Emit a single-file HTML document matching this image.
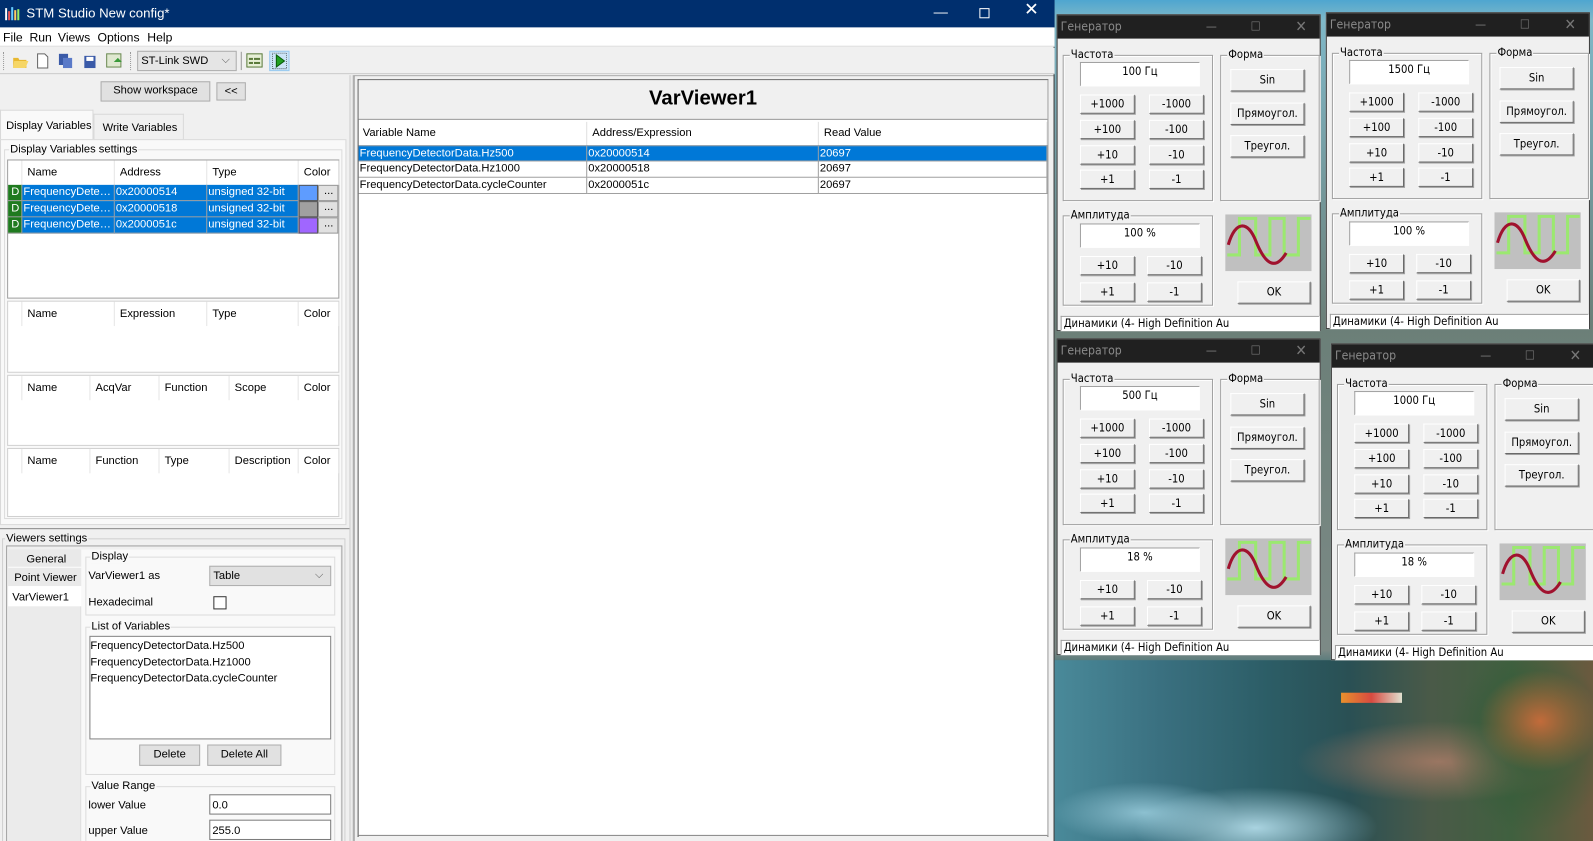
<!DOCTYPE html>
<html><head><meta charset="utf-8">
<style>
*{box-sizing:border-box;margin:0;padding:0}
html,body{width:1593px;height:841px;overflow:hidden;background:#f0f0f0}
body{font-family:"Liberation Sans","Noto Sans CJK SC",sans-serif;font-size:11px;color:#000}
#root{position:absolute;left:0;top:0;width:1568px;height:828px;transform:scale(1.01594,1.0157);transform-origin:0 0;overflow:hidden;background:#f0f0f0}
.a{position:absolute}
.t{position:absolute;white-space:nowrap;line-height:14px}
.btn{position:absolute;background:#e1e1e1;border:1px solid #adadad;text-align:center;line-height:17px;white-space:nowrap}
.grp{position:absolute;border:1px solid #d5d5d5}
.grp>span{position:absolute;top:-8px;left:4px;background:#f0f0f0;padding:0 1px;line-height:14px;white-space:nowrap}
.tbl{position:absolute;background:#fff;border:1px solid #a0a0a0}
.hd{position:absolute;top:0;height:24px;line-height:24px;padding-left:5px;border-right:1px solid #e5e5e5;white-space:nowrap}
.row{position:absolute;left:0;right:0;height:16px;line-height:15px;white-space:nowrap}
.cell{position:absolute;top:0;height:16px;padding-left:1px;border-right:1px solid #a0a0a0;border-bottom:1px solid #a0a0a0;overflow:hidden}
.gw{position:absolute;width:260px;height:312px;background:#f0f0f0;border:1px solid #3a3a3a;font-family:"DejaVu Sans Condensed","Liberation Sans Narrow","Liberation Sans",sans-serif;font-size:11px}
.gt{position:absolute;left:0;top:0;width:100%;height:23px;background:#202020;color:#8a8a8a;font-size:12px;line-height:23px;padding-left:3px}
.gt i{position:absolute;font-style:normal;color:#777;top:0}
.gg{position:absolute;border:1px solid #a0a0a0;box-shadow:1px 1px 0 #fff inset,1px 1px 0 #fff}
.gg>span{position:absolute;top:-8px;left:6px;background:#f0f0f0;padding:0 1px;line-height:14px;white-space:nowrap}
.gb{position:absolute;background:#f0f0f0;border:1px solid;border-color:#fff #696969 #696969 #fff;box-shadow:1px 1px 0 #a0a0a0;text-align:center;white-space:nowrap;line-height:17px}
.gi{position:absolute;background:#fff;border:1px solid;border-color:#a0a0a0 #fff #fff #a0a0a0;text-align:center;line-height:18px}
</style></head><body><div id="root">

<div class="a" style="left:1036px;top:0;width:532px;height:828px;background:linear-gradient(180deg,#4fa6d0 0px,#7fb8c8 20px,#6b7f78 320px,#7c8a86 640px,#3c6f73 660px,#2f5d63 740px,#6fa6b8 828px)"></div>
<div class="a" style="left:1036px;top:650px;width:532px;height:178px;background:
radial-gradient(ellipse 120px 40px at 200px 165px,#a9d3e0,transparent),
radial-gradient(ellipse 90px 30px at 90px 150px,#8cc0d0,transparent),
radial-gradient(ellipse 60px 50px at 480px 60px,#c26b3a,transparent),
radial-gradient(ellipse 80px 90px at 470px 80px,#2e5a36,transparent),
radial-gradient(ellipse 140px 40px at 380px 100px,#9a7662,transparent),
linear-gradient(90deg,#4a8a9a 0%,#3a7080 20%,#2c5d66 40%,#2a5054 55%,#4a5a48 70%,#40603f 85%,#6b5a3f 100%)"></div>
<div class="a" style="left:1320px;top:682px;width:60px;height:10px;background:linear-gradient(90deg,#e8902c,#d84a40,#e0e0d0)"></div>

<div class="a" style="left:0;top:0;width:1038px;height:828px;background:#f0f0f0;border-right:1px solid #333"></div>
<div class="a" style="left:0;top:0;width:1038px;height:27px;background:#002f6e;color:#fff">
 <svg class="a" style="left:5px;top:6px" width="16" height="14"><rect x="0" y="2" width="2" height="12" fill="#fff"/><rect x="3" y="5" width="2" height="9" fill="#e55"/><rect x="6" y="1" width="2" height="13" fill="#6cf"/><rect x="9" y="4" width="2" height="10" fill="#fc6"/><rect x="12" y="3" width="2" height="11" fill="#9e6"/></svg>
 <span class="t" style="left:26px;top:6px;font-size:13px">STM Studio New config*</span>
 <span class="t" style="left:919px;top:4px;font-size:14px">—</span>
 <div class="a" style="left:964px;top:8px;width:10px;height:10px;border:1px solid #fff"></div>
 <span class="t" style="left:1008px;top:3px;font-size:17px">✕</span>
</div>
<div class="a" style="left:0;top:27px;width:1038px;height:19px;background:#fff;border-bottom:1px solid #ddd;font-size:12px">
 <span class="t" style="left:3px;top:3px">File</span><span class="t" style="left:29px;top:3px">Run</span><span class="t" style="left:57px;top:3px">Views</span><span class="t" style="left:96px;top:3px">Options</span><span class="t" style="left:145px;top:3px">Help</span>
</div>
<div class="a" style="left:0;top:47px;width:1038px;height:26px;background:#f0f0f0;border-bottom:1px solid #ccc"></div>
<div class="a" style="left:3px;top:51px;width:2px;height:18px;border-left:1px dotted #999"></div>
<svg class="a" style="left:12px;top:52px" width="120" height="16">
 <path d="M1 5h5l1 2h7v8H1z" fill="#e8b830"/><path d="M2 8h14l-3 7H1z" fill="#f6d666"/>
 <path d="M25 1h7l3 3v11H25z" fill="#fff" stroke="#666"/>
 <rect x="46" y="1" width="9" height="11" fill="#3a5aa8"/><rect x="50" y="5" width="9" height="10" fill="#5a7ac8"/>
 <rect x="71" y="3" width="11" height="12" fill="#3a5aa8"/><rect x="73" y="4" width="7" height="4" fill="#fff"/>
 <rect x="93" y="1" width="14" height="13" fill="#dfe8d0" stroke="#6a8a50"/><path d="M100 9l4 -4 4 4z" fill="#3a9a3a"/>
</svg>
<div class="a" style="left:128px;top:51px;width:2px;height:18px;border-left:1px dotted #999"></div>
<div class="a" style="left:135px;top:50px;width:98px;height:20px;background:#e5e5e5;border:1px solid #adadad"><span class="t" style="left:3px;top:2px">ST-Link SWD</span><span class="t" style="left:82px;top:1px;color:#555">⌵</span></div>
<div class="a" style="left:237px;top:51px;width:1px;height:18px;background:#999"></div>
<svg class="a" style="left:242px;top:52px" width="18" height="16"><rect x="1" y="1" width="15" height="13" fill="#e6efd6" stroke="#5a7a3a"/><rect x="3" y="5" width="4" height="2" fill="#5a7a3a"/><rect x="8" y="5" width="6" height="2" fill="#5a7a3a"/><rect x="3" y="9" width="4" height="2" fill="#5a7a3a"/><rect x="8" y="9" width="6" height="2" fill="#5a7a3a"/></svg>
<div class="a" style="left:265px;top:50px;width:20px;height:20px;background:#cce4f7;border:1px solid #99c9ef"></div>
<svg class="a" style="left:268px;top:52px" width="14" height="16"><rect x="0" y="0" width="14" height="16" fill="none" stroke="#000" stroke-dasharray="1 1"/><path d="M4 2l8 6-8 6z" fill="#22a022" stroke="#0a5a0a"/></svg>

<div class="btn" style="left:99px;top:80px;width:108px;height:20px">Show workspace</div>
<div class="btn" style="left:213px;top:81px;width:29px;height:18px;line-height:16px">&lt;&lt;</div>
<div class="a" style="left:0;top:108px;width:92px;height:30px;background:#f9f9f9;border:1px solid #d9d9d9;border-bottom:none"><span class="t" style="left:5px;top:8px">Display Variables</span></div>
<div class="a" style="left:92px;top:112px;width:89px;height:25px;background:#f0f0f0;border:1px solid #d9d9d9;border-bottom:none"><span class="t" style="left:8px;top:6px">Write Variables</span></div>
<div class="a" style="left:0;top:137px;width:341px;height:380px;border:1px solid #d9d9d9;background:#f9f9f9"></div>
<div class="grp" style="left:4px;top:147px;width:333px;height:364px;border-color:#dcdcdc"><span style="background:#f9f9f9">Display Variables settings</span></div>

<div class="tbl" style="left:7px;top:157px;width:327px;height:137px">
 <div class="hd" style="left:0;width:14px"></div><div class="hd" style="left:14px;width:91px">Name</div><div class="hd" style="left:105px;width:91px">Address</div><div class="hd" style="left:196px;width:90px">Type</div><div class="hd" style="left:286px;width:40px">Color</div>
 <div class="row" style="top:24px"><div class="cell" style="left:0;width:14px;background:#1f7a1f;color:#fff;text-align:center">D</div><div class="cell" style="left:14px;width:91px;background:#0078d7;color:#fff">FrequencyDete…</div><div class="cell" style="left:105px;width:91px;background:#0078d7;color:#fff">0x20000514</div><div class="cell" style="left:196px;width:90px;background:#0078d7;color:#fff">unsigned 32-bit</div><div class="cell" style="left:286px;width:19px;background:#5e9cff;border:1px solid #555"></div><div class="cell" style="left:305px;width:20px;background:#e1e1e1;border:1px solid #999;text-align:center;line-height:11px">...</div></div>
 <div class="row" style="top:40px"><div class="cell" style="left:0;width:14px;background:#1f7a1f;color:#fff;text-align:center">D</div><div class="cell" style="left:14px;width:91px;background:#0078d7;color:#fff">FrequencyDete…</div><div class="cell" style="left:105px;width:91px;background:#0078d7;color:#fff">0x20000518</div><div class="cell" style="left:196px;width:90px;background:#0078d7;color:#fff">unsigned 32-bit</div><div class="cell" style="left:286px;width:19px;background:#a0a0a0;border:1px solid #555"></div><div class="cell" style="left:305px;width:20px;background:#e1e1e1;border:1px solid #999;text-align:center;line-height:11px">...</div></div>
 <div class="row" style="top:56px"><div class="cell" style="left:0;width:14px;background:#1f7a1f;color:#fff;text-align:center">D</div><div class="cell" style="left:14px;width:91px;background:#0078d7;color:#fff">FrequencyDete…</div><div class="cell" style="left:105px;width:91px;background:#0078d7;color:#fff">0x2000051c</div><div class="cell" style="left:196px;width:90px;background:#0078d7;color:#fff">unsigned 32-bit</div><div class="cell" style="left:286px;width:19px;background:#a066ff;border:1px solid #555"></div><div class="cell" style="left:305px;width:20px;background:#e1e1e1;border:1px solid #999;text-align:center;line-height:11px">...</div></div>
</div>
<div class="tbl" style="left:7px;top:296px;width:327px;height:71px;border-color:#d0d0d0">
 <div class="hd" style="left:0;width:14px"></div><div class="hd" style="left:14px;width:91px">Name</div><div class="hd" style="left:105px;width:91px">Expression</div><div class="hd" style="left:196px;width:90px">Type</div><div class="hd" style="left:286px;width:40px">Color</div>
</div>
<div class="tbl" style="left:7px;top:369px;width:327px;height:70px;border-color:#d0d0d0">
 <div class="hd" style="left:0;width:14px"></div><div class="hd" style="left:14px;width:67px">Name</div><div class="hd" style="left:81px;width:68px">AcqVar</div><div class="hd" style="left:149px;width:69px">Function</div><div class="hd" style="left:218px;width:68px">Scope</div><div class="hd" style="left:286px;width:40px">Color</div>
</div>
<div class="tbl" style="left:7px;top:441px;width:327px;height:68px;border-color:#d0d0d0">
 <div class="hd" style="left:0;width:14px"></div><div class="hd" style="left:14px;width:67px">Name</div><div class="hd" style="left:81px;width:68px">Function</div><div class="hd" style="left:149px;width:69px">Type</div><div class="hd" style="left:218px;width:68px">Description</div><div class="hd" style="left:286px;width:40px">Color</div>
</div>

<div class="a" style="left:0;top:520px;width:344px;height:1px;background:#888"></div>
<div class="grp" style="left:2px;top:530px;width:338px;height:300px;border-color:#d0d0d0"><span style="left:2px">Viewers settings</span></div>
<div class="a" style="left:6px;top:537px;width:331px;height:295px;border:1px solid #a0a0a0;background:#f0f0f0"></div>
<div class="a" style="left:8px;top:541px;width:72px;height:18px;background:#e9e9e9;border-bottom:1px solid #fff"><span class="t" style="left:18px;top:3px">General</span></div>
<div class="a" style="left:8px;top:559px;width:72px;height:18px;background:#e9e9e9"><span class="t" style="left:6px;top:3px">Point Viewer</span></div>
<div class="a" style="left:8px;top:577px;width:74px;height:20px;background:#fff"><span class="t" style="left:4px;top:4px">VarViewer1</span></div>
<div class="a" style="left:8px;top:597px;width:72px;height:231px;background:#ebebeb;border-right:1px solid #ddd"></div>
<div class="a" style="left:80px;top:541px;width:255px;height:287px;background:#f9f9f9"></div>
<div class="grp" style="left:84px;top:548px;width:246px;height:58px;border-color:#dcdcdc"><span style="background:#f9f9f9">Display</span></div>
<span class="t" style="left:87px;top:560px">VarViewer1 as</span>
<div class="a" style="left:206px;top:557px;width:120px;height:20px;background:#e1e1e1;border:1px solid #adadad"><span class="t" style="left:3px;top:2px">Table</span><span class="t" style="left:103px;top:1px;color:#555">⌵</span></div>
<span class="t" style="left:87px;top:586px">Hexadecimal</span>
<div class="a" style="left:210px;top:587px;width:13px;height:13px;background:#fff;border:1px solid #333"></div>
<div class="grp" style="left:84px;top:617px;width:246px;height:146px;border-color:#dcdcdc"><span style="background:#f9f9f9">List of Variables</span></div>
<div class="a" style="left:88px;top:626px;width:238px;height:102px;background:#fff;border:1px solid #828282">
 <span class="t" style="left:0;top:2px">FrequencyDetectorData.Hz500</span>
 <span class="t" style="left:0;top:18px">FrequencyDetectorData.Hz1000</span>
 <span class="t" style="left:0;top:34px">FrequencyDetectorData.cycleCounter</span>
</div>
<div class="btn" style="left:137px;top:733px;width:60px;height:21px;line-height:19px">Delete</div>
<div class="btn" style="left:204px;top:733px;width:73px;height:21px;line-height:19px">Delete All</div>
<div class="grp" style="left:84px;top:774px;width:246px;height:60px;border-color:#dcdcdc"><span style="background:#f9f9f9">Value Range</span></div>
<span class="t" style="left:87px;top:786px">lower Value</span>
<div class="a" style="left:206px;top:782px;width:120px;height:20px;background:#fff;border:1px solid #7a7a7a"><span class="t" style="left:2px;top:3px">0.0</span></div>
<span class="t" style="left:87px;top:811px">upper Value</span>
<div class="a" style="left:206px;top:807px;width:120px;height:20px;background:#fff;border:1px solid #7a7a7a"><span class="t" style="left:2px;top:3px">255.0</span></div>

<div class="a" style="left:344px;top:74px;width:4px;height:754px;background:#ebebeb;border-left:1px solid #ccc;border-right:1px solid #ccc"></div>

<div class="a" style="left:348px;top:74px;width:689px;height:754px;border-left:1px solid #888;border-top:1px solid #aaa;background:#f0f0f0"></div>
<div class="a" style="left:352px;top:78px;width:680px;height:746px;background:#fff;border:1px solid #555;border-right-color:#999"></div>
<div class="a" style="left:353px;top:79px;width:678px;height:39px;background:#f0f0f0;border-bottom:1px solid #999;text-align:center;font-weight:bold;font-size:20px;line-height:36px">VarViewer1</div>
<div class="a" style="left:353px;top:118px;width:678px;height:72px;font-size:11px">
 <div class="hd" style="left:0;width:225px;top:2px;height:23px;line-height:23px;border-right:1px solid #e0e0e0;padding-left:4px">Variable Name</div>
 <div class="hd" style="left:225px;width:228px;top:2px;height:23px;line-height:23px;border-right:1px solid #e0e0e0">Address/Expression</div>
 <div class="hd" style="left:453px;width:225px;top:2px;height:23px;line-height:23px">Read Value</div>
 <div class="row" style="top:25px"><div class="cell" style="left:0;width:225px;background:#0078d7;color:#fff;border-top:1px solid #a0a0a0">FrequencyDetectorData.Hz500</div><div class="cell" style="left:225px;width:228px;background:#0078d7;color:#fff;border-top:1px solid #a0a0a0">0x20000514</div><div class="cell" style="left:453px;width:225px;background:#0078d7;color:#fff;border-top:1px solid #a0a0a0">20697</div></div>
 <div class="row" style="top:41px"><div class="cell" style="left:0;width:225px">FrequencyDetectorData.Hz1000</div><div class="cell" style="left:225px;width:228px">0x20000518</div><div class="cell" style="left:453px;width:225px">20697</div></div>
 <div class="row" style="top:57px"><div class="cell" style="left:0;width:225px">FrequencyDetectorData.cycleCounter</div><div class="cell" style="left:225px;width:228px">0x2000051c</div><div class="cell" style="left:453px;width:225px">20697</div></div>
</div>
<div class="a" style="left:353px;top:822px;width:678px;height:6px;background:#f0f0f0;border-top:1px solid #888"></div>

<div class="gw" style="left:1040px;top:14px">
 <div class="gt">Генератор<i style="left:146px">—</i><i style="left:190px">☐</i><i style="left:234px;font-size:15px">✕</i></div>
 <div class="gg" style="left:5px;top:39px;width:148px;height:144px"><span>Частота</span></div>
 <div class="gi" style="left:22px;top:46px;width:118px;height:24px">100 Гц</div>
 <div class="gb" style="left:22px;top:78px;width:54px;height:19px">+1000</div><div class="gb" style="left:90px;top:78px;width:54px;height:19px">-1000</div>
 <div class="gb" style="left:22px;top:103px;width:54px;height:19px">+100</div><div class="gb" style="left:90px;top:103px;width:54px;height:19px">-100</div>
 <div class="gb" style="left:22px;top:128px;width:54px;height:19px">+10</div><div class="gb" style="left:90px;top:128px;width:54px;height:19px">-10</div>
 <div class="gb" style="left:22px;top:152px;width:54px;height:19px">+1</div><div class="gb" style="left:90px;top:152px;width:54px;height:19px">-1</div>
 <div class="gg" style="left:160px;top:39px;width:98px;height:144px"><span>Форма</span></div>
 <div class="gb" style="left:170px;top:53px;width:73px;height:22px;line-height:20px">Sin</div>
 <div class="gb" style="left:170px;top:86px;width:73px;height:22px;line-height:20px">Прямоугол.</div>
 <div class="gb" style="left:170px;top:118px;width:73px;height:22px;line-height:20px">Треугол.</div>
 <div class="gg" style="left:5px;top:197px;width:148px;height:89px"><span>Амплитуда</span></div>
 <div class="gi" style="left:22px;top:205px;width:118px;height:24px">100 %</div>
 <div class="gb" style="left:22px;top:237px;width:54px;height:19px">+10</div><div class="gb" style="left:88px;top:237px;width:54px;height:19px">-10</div>
 <div class="gb" style="left:22px;top:263px;width:54px;height:19px">+1</div><div class="gb" style="left:88px;top:263px;width:54px;height:19px">-1</div>
 <svg class="a" style="left:165px;top:196px" width="85" height="56"><rect width="85" height="56" fill="#c0c0c0"/><path d="M2 40H14V4H30V40H44V4H58V40H72V4H84" fill="none" stroke="#9be870" stroke-width="3"/><path d="M3 30C10 6 22 6 30 26S48 58 60 38" fill="none" stroke="#a0122e" stroke-width="3"/></svg>
 <div class="gb" style="left:177px;top:262px;width:72px;height:22px;line-height:20px">OK</div>
 <div class="gi" style="left:3px;top:296px;width:255px;height:15px;text-align:left;line-height:13px;padding-left:2px">Динамики (4- High Definition Au</div>
</div>

<div class="gw" style="left:1305px;top:12px">
 <div class="gt">Генератор<i style="left:146px">—</i><i style="left:190px">☐</i><i style="left:234px;font-size:15px">✕</i></div>
 <div class="gg" style="left:5px;top:39px;width:148px;height:144px"><span>Частота</span></div>
 <div class="gi" style="left:22px;top:46px;width:118px;height:24px">1500 Гц</div>
 <div class="gb" style="left:22px;top:78px;width:54px;height:19px">+1000</div><div class="gb" style="left:90px;top:78px;width:54px;height:19px">-1000</div>
 <div class="gb" style="left:22px;top:103px;width:54px;height:19px">+100</div><div class="gb" style="left:90px;top:103px;width:54px;height:19px">-100</div>
 <div class="gb" style="left:22px;top:128px;width:54px;height:19px">+10</div><div class="gb" style="left:90px;top:128px;width:54px;height:19px">-10</div>
 <div class="gb" style="left:22px;top:152px;width:54px;height:19px">+1</div><div class="gb" style="left:90px;top:152px;width:54px;height:19px">-1</div>
 <div class="gg" style="left:160px;top:39px;width:98px;height:144px"><span>Форма</span></div>
 <div class="gb" style="left:170px;top:53px;width:73px;height:22px;line-height:20px">Sin</div>
 <div class="gb" style="left:170px;top:86px;width:73px;height:22px;line-height:20px">Прямоугол.</div>
 <div class="gb" style="left:170px;top:118px;width:73px;height:22px;line-height:20px">Треугол.</div>
 <div class="gg" style="left:5px;top:197px;width:148px;height:89px"><span>Амплитуда</span></div>
 <div class="gi" style="left:22px;top:205px;width:118px;height:24px">100 %</div>
 <div class="gb" style="left:22px;top:237px;width:54px;height:19px">+10</div><div class="gb" style="left:88px;top:237px;width:54px;height:19px">-10</div>
 <div class="gb" style="left:22px;top:263px;width:54px;height:19px">+1</div><div class="gb" style="left:88px;top:263px;width:54px;height:19px">-1</div>
 <svg class="a" style="left:165px;top:196px" width="85" height="56"><rect width="85" height="56" fill="#c0c0c0"/><path d="M2 40H14V4H30V40H44V4H58V40H72V4H84" fill="none" stroke="#9be870" stroke-width="3"/><path d="M3 30C10 6 22 6 30 26S48 58 60 38" fill="none" stroke="#a0122e" stroke-width="3"/></svg>
 <div class="gb" style="left:177px;top:262px;width:72px;height:22px;line-height:20px">OK</div>
 <div class="gi" style="left:3px;top:296px;width:255px;height:15px;text-align:left;line-height:13px;padding-left:2px">Динамики (4- High Definition Au</div>
</div>

<div class="gw" style="left:1040px;top:333px">
 <div class="gt">Генератор<i style="left:146px">—</i><i style="left:190px">☐</i><i style="left:234px;font-size:15px">✕</i></div>
 <div class="gg" style="left:5px;top:39px;width:148px;height:144px"><span>Частота</span></div>
 <div class="gi" style="left:22px;top:46px;width:118px;height:24px">500 Гц</div>
 <div class="gb" style="left:22px;top:78px;width:54px;height:19px">+1000</div><div class="gb" style="left:90px;top:78px;width:54px;height:19px">-1000</div>
 <div class="gb" style="left:22px;top:103px;width:54px;height:19px">+100</div><div class="gb" style="left:90px;top:103px;width:54px;height:19px">-100</div>
 <div class="gb" style="left:22px;top:128px;width:54px;height:19px">+10</div><div class="gb" style="left:90px;top:128px;width:54px;height:19px">-10</div>
 <div class="gb" style="left:22px;top:152px;width:54px;height:19px">+1</div><div class="gb" style="left:90px;top:152px;width:54px;height:19px">-1</div>
 <div class="gg" style="left:160px;top:39px;width:98px;height:144px"><span>Форма</span></div>
 <div class="gb" style="left:170px;top:53px;width:73px;height:22px;line-height:20px">Sin</div>
 <div class="gb" style="left:170px;top:86px;width:73px;height:22px;line-height:20px">Прямоугол.</div>
 <div class="gb" style="left:170px;top:118px;width:73px;height:22px;line-height:20px">Треугол.</div>
 <div class="gg" style="left:5px;top:197px;width:148px;height:89px"><span>Амплитуда</span></div>
 <div class="gi" style="left:22px;top:205px;width:118px;height:24px">18 %</div>
 <div class="gb" style="left:22px;top:237px;width:54px;height:19px">+10</div><div class="gb" style="left:88px;top:237px;width:54px;height:19px">-10</div>
 <div class="gb" style="left:22px;top:263px;width:54px;height:19px">+1</div><div class="gb" style="left:88px;top:263px;width:54px;height:19px">-1</div>
 <svg class="a" style="left:165px;top:196px" width="85" height="56"><rect width="85" height="56" fill="#c0c0c0"/><path d="M2 40H14V4H30V40H44V4H58V40H72V4H84" fill="none" stroke="#9be870" stroke-width="3"/><path d="M3 30C10 6 22 6 30 26S48 58 60 38" fill="none" stroke="#a0122e" stroke-width="3"/></svg>
 <div class="gb" style="left:177px;top:262px;width:72px;height:22px;line-height:20px">OK</div>
 <div class="gi" style="left:3px;top:296px;width:255px;height:15px;text-align:left;line-height:13px;padding-left:2px">Динамики (4- High Definition Au</div>
</div>

<div class="gw" style="left:1310px;top:338px">
 <div class="gt">Генератор<i style="left:146px">—</i><i style="left:190px">☐</i><i style="left:234px;font-size:15px">✕</i></div>
 <div class="gg" style="left:5px;top:39px;width:148px;height:144px"><span>Частота</span></div>
 <div class="gi" style="left:22px;top:46px;width:118px;height:24px">1000 Гц</div>
 <div class="gb" style="left:22px;top:78px;width:54px;height:19px">+1000</div><div class="gb" style="left:90px;top:78px;width:54px;height:19px">-1000</div>
 <div class="gb" style="left:22px;top:103px;width:54px;height:19px">+100</div><div class="gb" style="left:90px;top:103px;width:54px;height:19px">-100</div>
 <div class="gb" style="left:22px;top:128px;width:54px;height:19px">+10</div><div class="gb" style="left:90px;top:128px;width:54px;height:19px">-10</div>
 <div class="gb" style="left:22px;top:152px;width:54px;height:19px">+1</div><div class="gb" style="left:90px;top:152px;width:54px;height:19px">-1</div>
 <div class="gg" style="left:160px;top:39px;width:98px;height:144px"><span>Форма</span></div>
 <div class="gb" style="left:170px;top:53px;width:73px;height:22px;line-height:20px">Sin</div>
 <div class="gb" style="left:170px;top:86px;width:73px;height:22px;line-height:20px">Прямоугол.</div>
 <div class="gb" style="left:170px;top:118px;width:73px;height:22px;line-height:20px">Треугол.</div>
 <div class="gg" style="left:5px;top:197px;width:148px;height:89px"><span>Амплитуда</span></div>
 <div class="gi" style="left:22px;top:205px;width:118px;height:24px">18 %</div>
 <div class="gb" style="left:22px;top:237px;width:54px;height:19px">+10</div><div class="gb" style="left:88px;top:237px;width:54px;height:19px">-10</div>
 <div class="gb" style="left:22px;top:263px;width:54px;height:19px">+1</div><div class="gb" style="left:88px;top:263px;width:54px;height:19px">-1</div>
 <svg class="a" style="left:165px;top:196px" width="85" height="56"><rect width="85" height="56" fill="#c0c0c0"/><path d="M2 40H14V4H30V40H44V4H58V40H72V4H84" fill="none" stroke="#9be870" stroke-width="3"/><path d="M3 30C10 6 22 6 30 26S48 58 60 38" fill="none" stroke="#a0122e" stroke-width="3"/></svg>
 <div class="gb" style="left:177px;top:262px;width:72px;height:22px;line-height:20px">OK</div>
 <div class="gi" style="left:3px;top:296px;width:255px;height:15px;text-align:left;line-height:13px;padding-left:2px">Динамики (4- High Definition Au</div>
</div>

</div></body></html>
